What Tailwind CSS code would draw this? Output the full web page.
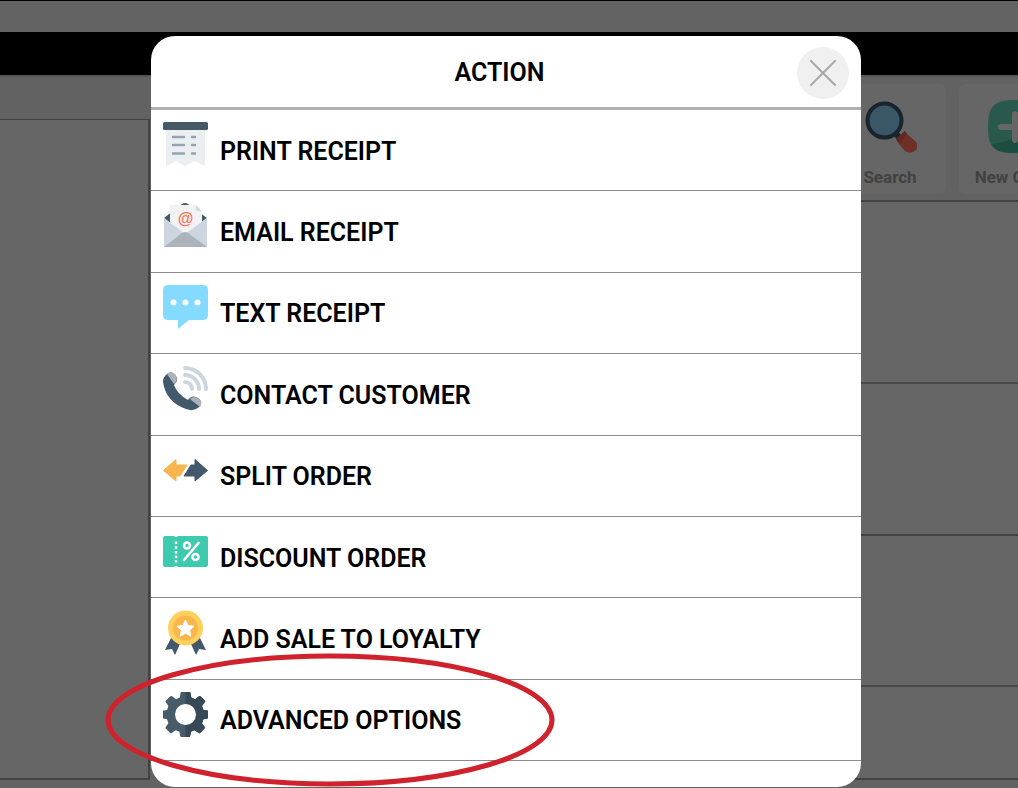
<!DOCTYPE html>
<html lang="en">
  <head>
    <meta charset="UTF-8" />
    <meta name="viewport" content="width=device-width, initial-scale=1.0" />
    <title>Order Actions</title>
    <script src="https://cdn.jsdelivr.net/npm/@tailwindcss/browser@4"></script>
  </head>
  <body class="relative min-h-screen overflow-hidden bg-[#626262] font-[Roboto,sans-serif] text-black">
    <!-- Dimmed order screen -->
    <div class="absolute inset-0 flex flex-col" aria-hidden="true">
      <div class="h-8 border-t border-black bg-[#636363]"></div>
      <div class="h-[43px] bg-black"></div>
      <div class="flex flex-1 border-t-2 border-[#555555]">
        <div class="flex w-[150px] flex-col pt-[42px] pb-2">
          <div class="flex-1 border-t border-r-2 border-b-2 border-[#424242] bg-[#666666]"></div>
        </div>
        <div class="ml-2 flex min-w-0 flex-1 flex-col pb-2">
          <div class="flex justify-end gap-[13px] overflow-hidden pt-[7px] pb-[6px]">
            <div class="flex h-[110px] w-[112px] shrink-0 flex-col items-center rounded-md bg-[#666666] pt-4">
              <svg class="h-[54px] w-[54px]" viewBox="0 0 54 54">
                <path d="M33 34l5 5" stroke="#1a242d" stroke-width="6" />
                <circle cx="21.500" cy="20.500" r="17" fill="#395766" stroke="#1a242d" stroke-width="4" />
                <path d="M33 39l9-8 2 3 7 6q6 5 2 10-5 5-11 1l-6-7z" fill="#6d3028" />
                <path d="M33 39l9-8 2 3-8 9z" fill="#62271f" />
              </svg>
              <span class="mt-[11px] text-[17px] leading-6 font-bold text-[#414141]">Search</span>
            </div>
            <div class="-mr-[53px] flex h-[110px] w-[112px] shrink-0 flex-col items-center rounded-md bg-[#666666] pt-4">
              <svg class="h-[54px] w-[54px]" viewBox="0 0 54 54">
                <path d="M27 0C48 0 54 6 54 27S48 53 27 53 0 48 0 27 6 0 27 0z" fill="#29594c" />
                <path d="M4 44Q33 42 52 12 54 18 54 27C54 48 48 53 27 53 14 53 7 51 4 44z" fill="#1b4d42" />
                <path d="M27 14v26M13 27h28" stroke="#666666" stroke-width="6" stroke-linecap="round" />
              </svg>
              <span class="mt-[11px] text-[17px] leading-6 font-bold whitespace-nowrap text-[#414141]">New Order</span>
            </div>
          </div>
          <div class="flex flex-1 flex-col border-y-2 border-[#424242] bg-[#666666]">
            <div class="h-[182px] border-b-2 border-[#484848]"></div>
            <div class="h-[152px] border-b-2 border-[#424242]"></div>
            <div class="h-[151px] border-b-2 border-[#484848]"></div>
          </div>
        </div>
      </div>
    </div>

    <!-- Action dialog -->
    <div class="relative flex min-h-screen pt-9 pr-[157px] pb-px pl-[151px]">
      <div role="dialog" aria-labelledby="action-title" class="flex flex-1 flex-col rounded-3xl bg-white pb-[26px]">
        <div class="flex items-center border-b-3 border-[#b0b0b0] pt-[11px] pr-3 pb-2 pl-[51px]">
          <h1 id="action-title" class="flex-1 text-center text-[25px] leading-7 font-semibold">ACTION</h1>
          <button type="button" aria-label="Close" class="flex size-[52px] items-center justify-center rounded-full bg-[#f0f0f0]">
            <svg class="size-7" viewBox="0 0 28 28" fill="none" stroke="#aaaaaa" stroke-width="2.200" stroke-linecap="round">
              <path d="M2 2l24 24M26 2L2 26" />
            </svg>
          </button>
        </div>

        <ul class="grid flex-1 auto-rows-fr">
          <li class="border-b border-[#8c8c8c]">
            <button type="button" class="flex h-full w-full items-center gap-3 px-3 text-left">
              <svg class="mt-3 size-[45px] shrink-0 self-start" viewBox="0 0 45 45">
                <path d="M3 5h39v39l-11-5-9 5-9-5-10 5z" fill="#ebeff2" />
                <rect width="45" height="8" rx="1.500" fill="#455a66" />
                <path d="M10 15h11M29 15h3M10 23h11M29 23h3M10 31.500h11M29 31.500h3" stroke="#92a5b0" stroke-width="2.500" stroke-linecap="round" />
              </svg>
              <span class="pt-[3px] text-[25px] leading-7 font-semibold">PRINT RECEIPT</span>
            </button>
          </li>
          <li class="border-b border-[#8c8c8c]">
            <button type="button" class="flex h-full w-full items-center gap-3 px-3 text-left">
              <svg class="mt-3 size-[45px] shrink-0 self-start" viewBox="0 0 45 45">
                <path d="M1 15L19 1q3-2 6 0l19 14-22 16z" fill="#455a66" />
                <path d="M7 2h26l6 6v20L22 38 7 28z" fill="#f2f2f2" />
                <path d="M33 2l6 6h-6z" fill="#d3d9e2" />
                <path d="M1 15l21 16 22-16v29H1z" fill="#cdd5e0" />
                <path d="M1 44l18-14q3-2 6 0l19 14z" fill="#acb3bb" />
                <text x="22.500" y="21" text-anchor="middle" font-family="Liberation Sans, sans-serif" font-size="16" font-weight="700" fill="#ff7058">@</text>
              </svg>
              <span class="pt-[3px] text-[25px] leading-7 font-semibold">EMAIL RECEIPT</span>
            </button>
          </li>
          <li class="border-b border-[#8c8c8c]">
            <button type="button" class="flex h-full w-full items-center gap-3 px-3 text-left">
              <svg class="mt-3 size-[45px] shrink-0 self-start" viewBox="0 0 45 45">
                <path d="M5 0h35q5 0 5 5v25q0 5-5 5H26L15 44v-9H5q-5 0-5-5V5q0-5 5-5z" fill="#84dbff" />
                <circle cx="10.500" cy="17.500" r="3" fill="#fff" />
                <circle cx="22.500" cy="17.500" r="3" fill="#fff" />
                <circle cx="34.500" cy="17.500" r="3" fill="#fff" />
              </svg>
              <span class="pt-[3px] text-[25px] leading-7 font-semibold">TEXT RECEIPT</span>
            </button>
          </li>
          <li class="border-b border-[#8c8c8c]">
            <button type="button" class="flex h-full w-full items-center gap-3 px-3 text-left">
              <svg class="mt-3 size-[45px] shrink-0 self-start" viewBox="0 0 45 45">
                <path d="M22 2A21 21 0 0 1 43 23M22 9A14 14 0 0 1 36 23M22 16A7 7 0 0 1 29 23" fill="none" stroke="#cdd6e0" stroke-width="4" stroke-linecap="round" />
                <path d="M4 8Q9 4 13 10q3 5-2 9 3 9 14 15 4-6 10-2 6 4 1 9-5 5-13 2Q3 36 0 16q0-5 4-8z" fill="#42596b" />
                <path d="M4 8Q7 4 12 8q3 4 1 8-1 2-2 2zM27 33q4-4 9 0 4 4 1 8z" fill="#acb3ba" />
              </svg>
              <span class="pt-[3px] text-[25px] leading-7 font-semibold">CONTACT CUSTOMER</span>
            </button>
          </li>
          <li class="border-b border-[#8c8c8c]">
            <button type="button" class="flex h-full w-full items-center gap-3 px-3 text-left">
              <svg class="mt-3 size-[45px] shrink-0 self-start" viewBox="0 0 45 45" stroke-width="1" stroke-linejoin="round">
                <path d="M.5 22.500L13 11.500v5.500h11L17 28h-4v5z" fill="#f8b54d" stroke="#f8b54d" />
                <path d="M44.500 22.500L32 11.500v5.500h-4L21 28h11v5z" fill="#42596b" stroke="#42596b" />
              </svg>
              <span class="pt-[3px] text-[25px] leading-7 font-semibold">SPLIT ORDER</span>
            </button>
          </li>
          <li class="border-b border-[#8c8c8c]">
            <button type="button" class="flex h-full w-full items-center gap-3 px-3 text-left">
              <svg class="mt-3 size-[45px] shrink-0 self-start" viewBox="0 0 45 45">
                <path d="M2 7h9q2 2 4 0h28q2 0 2 2v27q0 2-2 2H15q-2-2-4 0H2q-2 0-2-2V9q0-2 2-2z" fill="#3dcaaf" />
                <path d="M13 12.500v21" stroke="#fff" stroke-width="2.500" stroke-dasharray="2.500 2.200" />
                <g fill="none" stroke="#fff" stroke-width="2.600" stroke-linecap="round">
                  <path d="M35.500 14L21 31" />
                  <circle cx="24" cy="16.500" r="3" />
                  <circle cx="32.500" cy="28" r="3" />
                </g>
              </svg>
              <span class="pt-[3px] text-[25px] leading-7 font-semibold">DISCOUNT ORDER</span>
            </button>
          </li>
          <li class="border-b border-[#8c8c8c]">
            <button type="button" class="flex h-full w-full items-center gap-3 px-3 text-left">
              <svg class="mt-3 size-[45px] shrink-0 self-start" viewBox="0 0 45 45">
                <path d="M9 26l8 8-5 11-3-6-7 1zM36 26l-8 8 5 11 3-6 7 1z" fill="#42596b" />
                <circle cx="22.500" cy="18" r="17.500" fill="#ffd15c" />
                <circle cx="22.500" cy="18" r="12.500" fill="#f8b64c" />
                <path d="M22.500 10l2.500 5.500 6 .7-4.400 4 1.200 6-5.300-3-5.300 3 1.200-6-4.400-4 6-.7z" fill="#fff" stroke="#fff" stroke-linejoin="round" />
              </svg>
              <span class="pt-[3px] text-[25px] leading-7 font-semibold">ADD SALE TO LOYALTY</span>
            </button>
          </li>
          <li class="relative border-b border-[#8c8c8c]">
            <button type="button" class="flex h-full w-full items-center gap-3 px-3 text-left">
              <svg class="mt-3 size-[45px] shrink-0 self-start" viewBox="0 0 45 45">
                <path d="M18.500 0h8q1 0 1 1l.8 4.500 3.700 1.700 4-3q1-.6 1.600 0l4.200 4.300q.8.800.2 1.600l-3 3.900 1.500 4 4 .5q1 .1 1 1v6q0 1-1 1l-4 .8-1.500 4 2.700 3.700q.6.900-.2 1.600l-4.200 4.300q-.7.700-1.600 0l-4-2.700-3.700 1.600-.8 4.200q-.1 1-1 1h-8q-1 0-1-1l-.7-4.200-3.800-1.600-4 2.700q-.8.700-1.600 0l-4.200-4.300q-.8-.7-.2-1.600l2.700-3.700-1.400-4-3.500-.8q-1 0-1-1v-6q0-.9 1-1l3.500-.5 1.400-4-2.700-3.900q-.6-.8.2-1.600L7.500 4.200q.8-.6 1.600 0l4 3 3.700-1.700.7-4.500q0-1 1-1z" fill="#485b69" />
                <path d="M22.500 0h4q1 0 1 1l.8 4.500 3.700 1.700 4-3q1-.6 1.600 0l4.200 4.300q.8.800.2 1.600l-3 3.900 1.500 4 4 .5q1 .1 1 1v6q0 1-1 1l-4 .8-1.500 4 2.700 3.700q.6.900-.2 1.600l-4.200 4.300q-.7.700-1.600 0l-4-2.700-3.700 1.600-.8 4.200q-.1 1-1 1h-3.700z" fill="#374957" />
                <circle cx="22.500" cy="22.500" r="10.500" fill="#fff" />
              </svg>
              <span class="pt-[3px] text-[25px] leading-7 font-semibold">ADVANCED OPTIONS</span>
            </button>
            <!-- Highlight ring -->
            <svg class="pointer-events-none absolute -top-[27px] -left-[46px] h-[134px] w-[450px]" viewBox="0 0 450 134" fill="none">
              <ellipse cx="225" cy="67" rx="222" ry="64" stroke="#cf222c" stroke-width="5" />
            </svg>
          </li>
        </ul>
      </div>
    </div>
  </body>
</html>
